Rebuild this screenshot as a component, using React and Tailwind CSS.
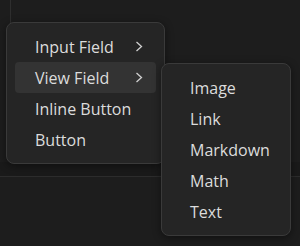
const mainItems = [
  { label: 'Input Field', sub: true },
  { label: 'View Field', sub: true, active: true },
  { label: 'Inline Button' },
  { label: 'Button' },
];

const viewFieldItems = ['Image', 'Link', 'Markdown', 'Math', 'Text'];

function Chevron() {
  return (
    <svg width="8" height="11" viewBox="0 0 8 11" fill="none" className="shrink-0">
      <path d="M1.5 1L6.5 5.5L1.5 10" stroke="#d0d0d0" strokeWidth="1.3" />
    </svg>
  );
}

function MenuItem({ label, sub, active }) {
  return (
    <div
      className={`flex h-[31px] items-center justify-between rounded-[4px] pl-[20px] pr-[13px] ${active ? 'bg-[#333333]' : ''}`}
    >
      <span>{label}</span>
      {sub && <Chevron />}
    </div>
  );
}

function Menu({ className, children }) {
  return (
    <div className={`absolute rounded-[8px] border border-[#3a3a3a] bg-[#252525] p-[8px] shadow-[0_2px_8px_rgba(0,0,0,0.45)] ${className}`}>
      {children}
    </div>
  );
}

export default function App() {
  return (
    <div
      className="relative flex h-[246px] w-[300px] flex-col overflow-hidden bg-[#1d1d1d] text-[16px] text-[#dcdcdc]"
      style={{ fontFamily: '"Open Sans", "Noto Sans", sans-serif' }}
    >
      {/* editor chrome behind the menus */}
      <div className="h-[162px] shrink-0">
        <div className="ml-[10px] h-[26px] w-px bg-[#2e2e2e]" />
      </div>
      <div className="h-[15px] shrink-0 border-b border-[#2c2c2c] bg-[#1a1a1a]" />
      <div className="flex-1" />

      <Menu className="left-[6px] top-[22px] w-[159px]">
        {mainItems.map(item => (
          <MenuItem key={item.label} {...item} />
        ))}
      </Menu>

      <Menu className="left-[161px] top-[63px] w-[130px]">
        {viewFieldItems.map(label => (
          <MenuItem key={label} label={label} />
        ))}
      </Menu>
    </div>
  );
}
